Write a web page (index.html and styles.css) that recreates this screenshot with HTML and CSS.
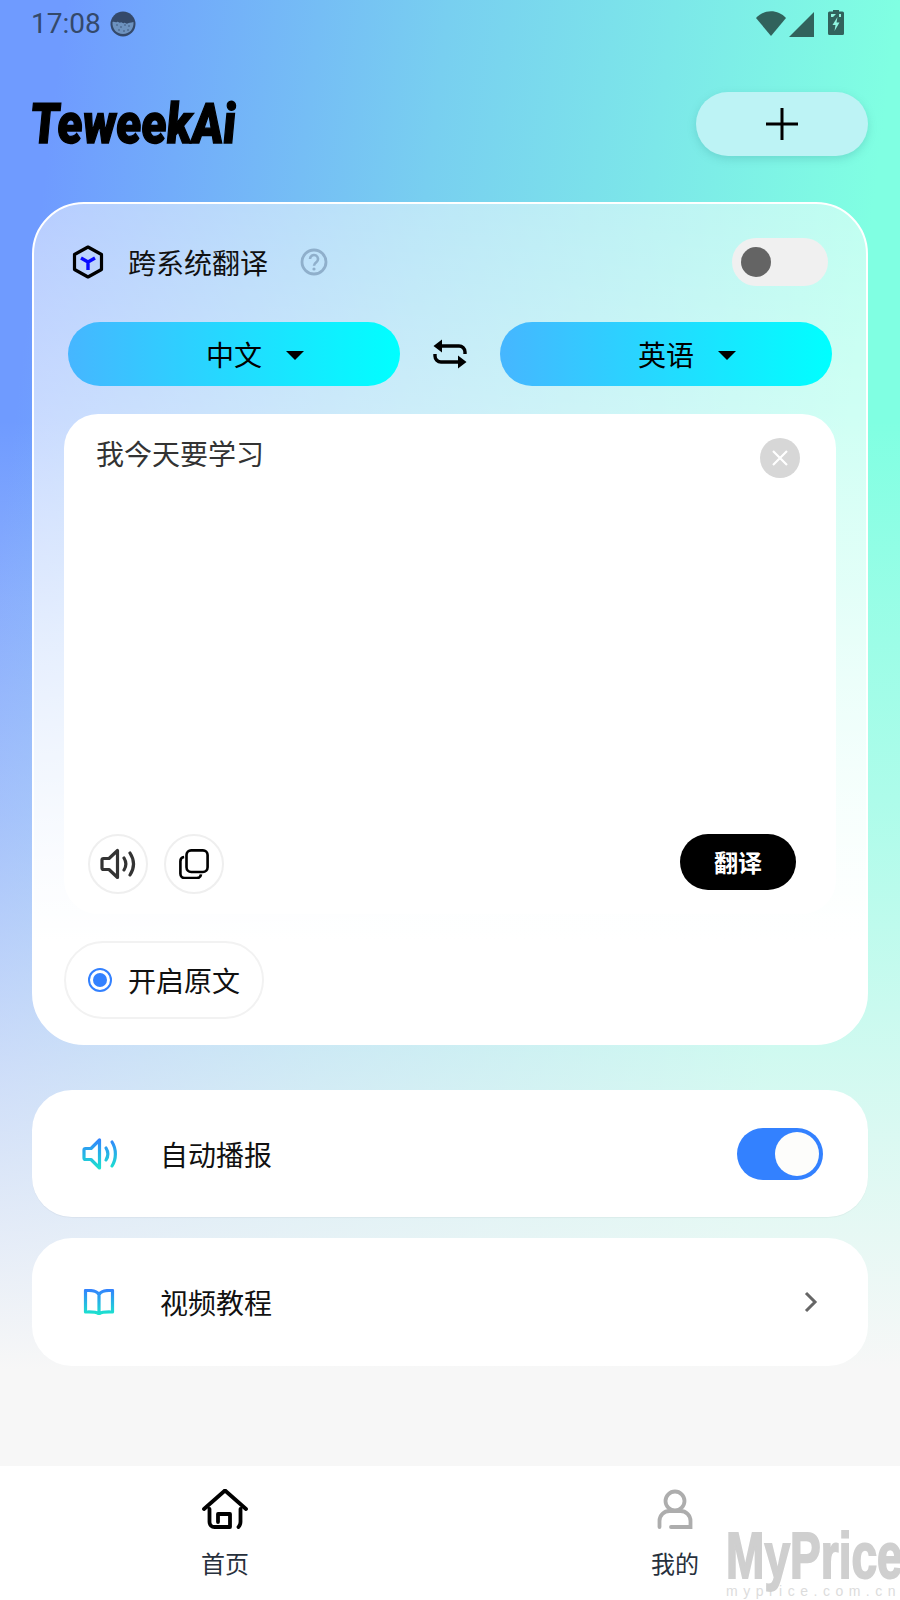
FILE: index.html
```html
<!DOCTYPE html>
<html lang="zh-CN">
<head>
<meta charset="utf-8">
<title>TeweekAi</title>
<link rel="stylesheet" href="styles.css">
</head>
<body>
<svg class="defs" width="0" height="0" aria-hidden="true">
  <defs>
    <linearGradient id="blueTealUser" gradientUnits="userSpaceOnUse" x1="0" y1="0" x2="0" y2="32">
      <stop offset="0" stop-color="#3381ff"/>
      <stop offset="1" stop-color="#1ae6cc"/>
    </linearGradient>
    <linearGradient id="blueTealBook" gradientUnits="userSpaceOnUse" x1="0" y1="0" x2="0" y2="26">
      <stop offset="0" stop-color="#3381ff"/>
      <stop offset="1" stop-color="#1ae6cc"/>
    </linearGradient>
  </defs>
</svg>
<div class="app">
  <div class="status">
    <div class="status-left">
      <span class="time">17:08</span>
      <svg class="face" width="26" height="26" viewBox="0 0 26 26">
        <circle cx="13" cy="13" r="12.5" fill="#34496a"/>
        <path d="M2.500 11c2-1 3 1 4.500 0s2 1.500 3.500.5 2 1.500 3.500.5 2 1.500 3.500.5 3-.5 6-1.500c.5 7-4 12-10.500 12S2 18 2.500 11z" fill="#6d92bf"/>
        <g fill="#34496a"><circle cx="7" cy="14" r=".7"/><circle cx="11" cy="16" r=".7"/><circle cx="15" cy="14" r=".7"/><circle cx="19" cy="15" r=".7"/><circle cx="9" cy="19" r=".7"/><circle cx="14" cy="20" r=".7"/><circle cx="18" cy="19" r=".7"/></g>
      </svg>
    </div>
    <div class="status-right">
      <svg width="30" height="25" viewBox="0 0 30 25"><path d="M0 7C8-2 22-2 30 7L15 25z" fill="#31625c"/></svg>
      <svg class="signal" width="25" height="25" viewBox="0 0 25 25"><path d="M0 25L25 0v25z" fill="#31625c"/></svg>
      <svg class="battery" width="16" height="25" viewBox="0 0 16 25">
        <path d="M5 0h6v1.500h3.500a1.500 1.500 0 0 1 1.500 1.500v20.500a1.500 1.500 0 0 1-1.500 1.500h-13A1.500 1.500 0 0 1 0 23.500V3a1.500 1.500 0 0 1 1.500-1.500H5z" fill="#31625c"/>
        <path d="M9.500 7L4.500 15h3l-1 6 5-8.500h-3z" fill="#8ff5df"/>
        <path d="M3 4h5L5 7H3zM11 4h2v3h-2z" fill="#8ff5df"/>
      </svg>
    </div>
  </div>

  <header class="header">
    <div class="logo">TeweekAi</div>
    <button class="add" type="button" aria-label="add">
      <svg width="32" height="32" viewBox="0 0 32 32"><path d="M16 0v32M0 16h32" stroke="#000" stroke-width="3" fill="none"/></svg>
    </button>
  </header>

  <main class="card">
    <div class="cross">
      <svg class="hex" width="32" height="34" viewBox="0 0 32 34">
        <path d="M16 2l13.500 7.500v15L16 32 2.500 24.500v-15z" fill="none" stroke="#000" stroke-width="3.200" stroke-linejoin="round"/>
        <path d="M16 17l-7-4M16 17l7-4M16 17v8" fill="none" stroke="#0a0aff" stroke-width="3.400"/>
      </svg>
      <span class="cross-label">跨系统翻译</span>
      <svg class="help" width="28" height="28" viewBox="0 0 28 28">
        <circle cx="14" cy="14" r="12" fill="none" stroke="#8fafcb" stroke-width="2.800"/>
        <path d="M10 11a4 4 0 1 1 6.500 3.100c-1.500 1.200-2.500 1.900-2.500 3.600" fill="none" stroke="#8fafcb" stroke-width="2.600"/>
        <circle cx="14" cy="21" r="1.600" fill="#8fafcb"/>
      </svg>
      <div class="switch-off"><span class="switch-off-knob"></span></div>
    </div>

    <div class="langs">
      <button class="lang" type="button"><span class="lang-name">中文</span><span class="caret"></span></button>
      <svg class="swap" width="34" height="30" viewBox="0 0 34 30">
        <path d="M8 7h18a6 6 0 0 1 6 6v2M26 23H8a6 6 0 0 1-6-6v-2" fill="none" stroke="#000" stroke-width="3.400"/>
        <path d="M9 0.500L0.500 7 9 13.500zM25 16.500l8.500 6.500-8.500 6.500z" fill="#000"/>
      </svg>
      <button class="lang" type="button"><span class="lang-name">英语</span><span class="caret"></span></button>
    </div>

    <section class="editor">
      <div class="editor-top">
        <div class="source">我今天要学习</div>
        <button class="clear" type="button" aria-label="clear">
          <svg width="16" height="16" viewBox="0 0 16 16"><path d="M1 1l14 14M15 1L1 15" stroke="#fff" stroke-width="2.200" fill="none"/></svg>
        </button>
      </div>
      <div class="editor-bottom">
        <div class="tools">
          <button class="tool" type="button" aria-label="speak">
            <svg width="36" height="32" viewBox="0 0 36 32">
              <path d="M2 12a1.500 1.500 0 0 1 1.500-1.500H9L17.500 2.500V29.500L9 21.500H3.500A1.500 1.500 0 0 1 2 20z" fill="none" stroke="#333" stroke-width="3.200" stroke-linejoin="round"/>
              <path d="M24 10c2.500 4 2.500 8 0 12M30 5c4.500 7 4.500 15 0 22" fill="none" stroke="#333" stroke-width="3.200" stroke-linecap="round"/>
            </svg>
          </button>
          <button class="tool" type="button" aria-label="copy">
            <svg width="30" height="30" viewBox="0 0 32 32">
              <path d="M5.500 8.500A4.500 4.500 0 0 0 1.500 13v13.500A4.500 4.500 0 0 0 6 31h13a4.500 4.500 0 0 0 4.500-4" fill="none" stroke="#000" stroke-width="2.800"/>
              <rect x="8" y="1.500" width="22.500" height="23" rx="5" fill="none" stroke="#000" stroke-width="2.800"/>
            </svg>
          </button>
        </div>
        <button class="translate" type="button">翻译</button>
      </div>
    </section>

    <div class="origin">
      <span class="radio"><span class="radio-dot"></span></span>
      <span class="origin-label">开启原文</span>
    </div>
  </main>

  <div class="row row-first">
    <span class="row-icon">
      <svg width="36" height="32" viewBox="0 0 36 32">
        <path d="M2 12a1.500 1.500 0 0 1 1.500-1.500H9L17.500 2V30L9 21.500H3.500A1.500 1.500 0 0 1 2 20z" fill="none" stroke="url(#blueTealUser)" stroke-width="3.200" stroke-linejoin="round"/>
        <path d="M24 10c2.500 4 2.500 8 0 12M30 4c4.500 7 4.500 17 0 24" fill="none" stroke="url(#blueTealUser)" stroke-width="3.200" stroke-linecap="round"/>
      </svg>
    </span>
    <span class="row-label">自动播报</span>
    <div class="switch-on"><span class="switch-on-knob"></span></div>
  </div>

  <div class="row row-second">
    <span class="row-icon">
      <svg class="book" width="32" height="26" viewBox="0 0 32 26">
        <path d="M16 5.500C14 2.500 11 1.500 6 1.500H2.500V23c5 0 10-.5 13.500 1.800C19.500 22.500 24.500 23 29.500 23V1.500H26c-5 0-8 1-10 4zM16 5.500v19" fill="none" stroke="url(#blueTealBook)" stroke-width="3.200" stroke-linejoin="round"/>
      </svg>
    </span>
    <span class="row-label">视频教程</span>
    <svg class="chevron" width="14" height="22" viewBox="0 0 14 22"><path d="M2 2l9 9-9 9" fill="none" stroke="#666" stroke-width="3"/></svg>
  </div>

  <nav class="tabs">
    <div class="tab">
      <svg width="48" height="40" viewBox="0 0 48 40">
        <path d="M3 20L24 1.500 45 20M8.500 20v13a5 5 0 0 0 5 5H29V25H17v8M39.500 20v13c0 2-.7 3.500-2 5" fill="none" stroke="#000" stroke-width="3.800" stroke-linecap="round" stroke-linejoin="round"/>
      </svg>
      <span class="tab-label">首页</span>
    </div>
    <div class="tab">
      <svg width="36" height="40" viewBox="0 0 36 40">
        <circle cx="18" cy="12" r="9.500" fill="none" stroke="#adadad" stroke-width="3.800"/>
        <path d="M2.500 38v-6a10 10 0 0 1 10-10h11a10 10 0 0 1 10 10v6H14" fill="none" stroke="#adadad" stroke-width="3.800" stroke-linecap="round"/>
      </svg>
      <span class="tab-label">我的</span>
    </div>
  </nav>

  <div class="watermark">
    <div class="wm-main">MyPrice</div>
    <div class="wm-sub">myprice.com.cn</div>
  </div>
</div>
</body>
</html>
```
FILE: styles.css
```css
* { box-sizing: border-box; }
html, body { margin: 0; padding: 0; }
body { font-family: "Noto Sans CJK SC", "Noto Sans", sans-serif; color: #111; }
button { font: inherit; border: 0; padding: 0; background: none; color: inherit; }
svg { display: block; }
.defs { position: absolute; }

.app {
  position: relative;
  width: 900px;
  height: 1600px;
  overflow: hidden;
  display: flex;
  flex-direction: column;
  background:
    linear-gradient(to bottom, rgba(247,247,247,0) 420px, rgba(247,247,247,.2) 600px, rgba(247,247,247,.4) 820px, rgba(247,247,247,.7) 1080px, #f7f7f7 1370px),
    linear-gradient(97deg, #6f9bff 6%, #78cff0 41%, #80ffe2 82%);
}

.status {
  height: 48px;
  padding: 0 56px 0 31px;
  display: flex;
  justify-content: space-between;
  align-items: flex-start;
}
.status-left { display: flex; align-items: center; gap: 9px; padding-top: 7px; }
.time { font-family: Roboto, sans-serif; font-size: 28px; line-height: 33px; color: #34496a; }
.status-right { display: flex; align-items: flex-start; padding-top: 11px; }
.signal { margin-left: 3px; margin-top: 1px; }
.battery { margin-left: 14px; margin-top: -1px; }

.header {
  margin-top: 44px;
  height: 64px;
  padding: 0 32px;
  display: flex;
  justify-content: space-between;
  align-items: center;
}
.logo {
  font-family: Roboto, sans-serif;
  font-weight: 900;
  font-style: italic;
  font-size: 56px;
  line-height: 64px;
  color: #000;
  -webkit-text-stroke: 1.400px #000;
  transform: skewX(3deg) scaleX(.85);
  transform-origin: left bottom;
  white-space: nowrap;
}
.add {
  width: 172px;
  height: 64px;
  border-radius: 32px;
  background: #bdf3f5;
  box-shadow: 0 3px 9px rgba(60,150,150,.28);
  display: flex;
  align-items: center;
  justify-content: center;
}

.card {
  margin: 46px 32px 0;
  height: 843px;
  padding: 34px 30px 0;
  border: 2px solid #fff;
  border-radius: 52px;
  background: linear-gradient(to bottom, rgba(255,255,255,.5) 0, rgba(255,255,255,.72) 45%, #fff 88%);
}

.cross {
  height: 48px;
  padding: 0 8px;
  display: flex;
  align-items: center;
}
.cross-label { margin-left: 24px; font-size: 28px; line-height: 40px; color: #111; }
.help { margin-left: 32px; }
.switch-off {
  margin-left: auto;
  width: 96px;
  height: 48px;
  border-radius: 24px;
  background: #f0f0f0;
  padding: 9px;
}
.switch-off-knob { display: block; width: 30px; height: 30px; border-radius: 50%; background: #646464; }

.langs {
  margin-top: 36px;
  padding: 0 4px;
  display: flex;
  justify-content: space-between;
  align-items: center;
}
.lang {
  width: 332px;
  height: 64px;
  border-radius: 32px;
  background: linear-gradient(90deg, #46b6ff, #00ffff);
  display: flex;
  align-items: center;
  padding-left: 138px;
}
.lang-name { font-size: 28px; line-height: 40px; color: #000; }
.caret {
  margin-left: 24px;
  margin-top: 2px;
  width: 0;
  height: 0;
  border-left: 9px solid transparent;
  border-right: 9px solid transparent;
  border-top: 9px solid #000;
}

.editor {
  margin-top: 28px;
  height: 500px;
  border-radius: 34px;
  background: #fff;
  display: flex;
  flex-direction: column;
  justify-content: space-between;
}
.editor-top {
  padding: 24px 36px 0 32px;
  display: flex;
  justify-content: space-between;
  align-items: flex-start;
}
.source { font-size: 28px; line-height: 30px; color: #333; }
.clear {
  width: 40px;
  height: 40px;
  border-radius: 50%;
  background: #d7d7d7;
  display: flex;
  align-items: center;
  justify-content: center;
}
.editor-bottom {
  padding: 0 40px 20px 24px;
  display: flex;
  justify-content: space-between;
  align-items: flex-start;
}
.tools { display: flex; gap: 16px; }
.tool {
  width: 60px;
  height: 60px;
  border-radius: 50%;
  border: 2px solid #efefef;
  display: flex;
  align-items: center;
  justify-content: center;
}
.translate {
  width: 116px;
  height: 56px;
  border-radius: 28px;
  background: #000;
  color: #fff;
  font-size: 24px;
  font-weight: 700;
  line-height: 56px;
  text-align: center;
}

.origin {
  margin-top: 27px;
  width: 200px;
  height: 78px;
  border: 2px solid #f2f2f2;
  border-radius: 39px;
  padding-left: 22px;
  display: flex;
  align-items: center;
}
.radio {
  width: 24px;
  height: 24px;
  border-radius: 50%;
  border: 2px solid #3381ff;
  display: flex;
  align-items: center;
  justify-content: center;
}
.radio-dot { width: 14px; height: 14px; border-radius: 50%; background: #3381ff; }
.origin-label { margin-left: 16px; font-size: 28px; line-height: 40px; color: #111; }

.row {
  margin: 0 32px;
  background: #fff;
  border-radius: 40px;
  display: flex;
  align-items: center;
  padding: 0 45px 0 50px;
}
.row-first { margin-top: 45px; height: 127px; box-shadow: 0 1px 1px rgba(0,0,0,.04); }
.row-second { margin-top: 21px; height: 128px; padding-right: 50px; }
.row-icon { width: 78px; display: flex; align-items: center; }
.book { margin-left: 1px; }
.row-label { font-size: 28px; line-height: 40px; color: #111; }
.switch-on {
  margin-left: auto;
  width: 86px;
  height: 52px;
  border-radius: 26px;
  background: #3381ff;
  padding: 4px;
  display: flex;
  justify-content: flex-end;
}
.switch-on-knob { display: block; width: 44px; height: 44px; border-radius: 50%; background: #fdfdfb; }
.chevron { margin-left: auto; }

.tabs {
  margin-top: auto;
  height: 134px;
  background: #fff;
  display: grid;
  grid-template-columns: 1fr 1fr;
}
.tab {
  padding-top: 23px;
  display: flex;
  flex-direction: column;
  align-items: center;
}
.tab-label { margin-top: 17px; font-size: 24px; line-height: 34px; color: #27303c; }

.watermark {
  position: absolute;
  left: 726px;
  top: 1528px;
  width: 180px;
  pointer-events: none;
}
.wm-main {
  font-family: "Liberation Sans", sans-serif;
  font-weight: 700;
  font-size: 64px;
  line-height: 56px;
  color: #cfcfcf;
  -webkit-text-stroke: 2px #cfcfcf;
  transform: scaleX(.72);
  transform-origin: left center;
  white-space: nowrap;
}
.wm-sub {
  font-family: "Liberation Sans", sans-serif;
  font-size: 14px;
  line-height: 14px;
  letter-spacing: 5.500px;
  color: #dcdcdc;
  white-space: nowrap;
}
```
